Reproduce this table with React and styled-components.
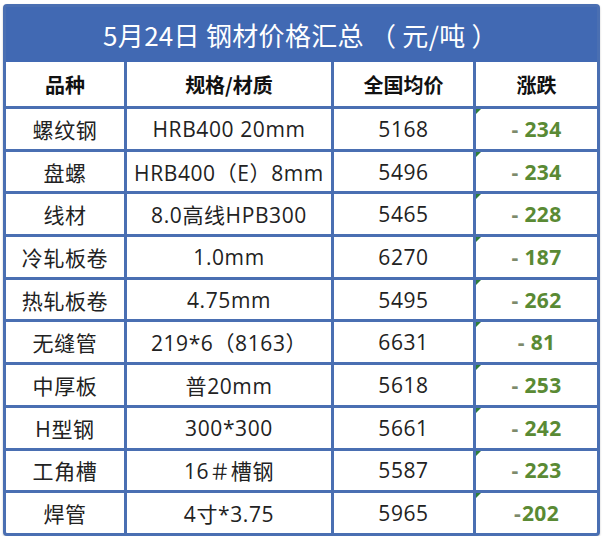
import React from "react";
import styled, { createGlobalStyle } from "styled-components";

const Global = createGlobalStyle`
  html, body { margin: 0; padding: 0; background: #ffffff; }
  body { font-family: "Open Sans", "Noto Sans CJK SC", sans-serif; }
`;

const BLUE = "#4a6fb2";

const Page = styled.div`
  padding: 4px 5px 0 3px;
`;

const Frame = styled.div`
  width: 597px;
  box-sizing: border-box;
  border: 3px solid ${BLUE};
  border-radius: 4px;
  background: ${BLUE};
  box-shadow: 0 1px 2px rgba(0, 0, 0, 0.25);
  overflow: hidden;
`;

const Title = styled.div`
  height: 55px;
  background: #4169b3;
  color: #ffffff;
  display: flex;
  align-items: center;
  justify-content: center;
  font-family: "Noto Sans CJK SC", sans-serif;
  font-weight: 400;
  font-size: 26px;
  letter-spacing: 0.3px;
  padding-right: 2px;
`;

const Grid = styled.div`
  display: grid;
  grid-template-columns: 118px 204px 139px 121px;
  grid-auto-rows: 39.7px;
  grid-template-rows: 44px;
  gap: 3px;
  background: ${BLUE};
`;

const Cell = styled.div`
  position: relative;
  background: #ffffff;
  display: flex;
  align-items: center;
  justify-content: center;
  font-size: ${(p) => (p.$head ? "20px" : "21px")};
  color: ${(p) => (p.$head ? "#111111" : "#222222")};
  font-weight: ${(p) => (p.$head ? 700 : 400)};
  letter-spacing: ${(p) => (p.$head ? "0" : "0.6px")};
  font-family: ${(p) =>
    p.$head ? `"Noto Sans CJK SC", sans-serif` : `"Open Sans", "Noto Sans CJK SC", sans-serif`};
  white-space: nowrap;
`;

const ChangeCell = styled(Cell)`
  font-weight: 700;
  letter-spacing: 0.3px;
  &::before {
    content: "";
    position: absolute;
    left: 0;
    top: 0;
    border-top: 5px solid #2f7d3a;
    border-right: 5px solid transparent;
  }
`;

const Dash = styled.span`
  color: #7d8a6b;
  margin-right: ${(p) => (p.$tight ? "1px" : "6px")};
`;

const Num = styled.span`
  color: #5a8a34;
`;

const rows = [
  ["螺纹钢", "HRB400 20mm", "5168", "234"],
  ["盘螺", "HRB400（E）8mm", "5496", "234"],
  ["线材", "8.0高线HPB300", "5465", "228"],
  ["冷轧板卷", "1.0mm", "6270", "187"],
  ["热轧板卷", "4.75mm", "5495", "262"],
  ["无缝管", "219*6（8163）", "6631", "81"],
  ["中厚板", "普20mm", "5618", "253"],
  ["H型钢", "300*300", "5661", "242"],
  ["工角槽", "16＃槽钢", "5587", "223"],
  ["焊管", "4寸*3.75", "5965", "202", true],
];

export default function App() {
  return (
    <Page>
      <Global />
      <Frame>
        <Title>5月24日 钢材价格汇总 （ 元/吨 ）</Title>
        <Grid>
          <Cell $head>品种</Cell>
          <Cell $head>规格/材质</Cell>
          <Cell $head>全国均价</Cell>
          <Cell $head>涨跌</Cell>
          {rows.map(([name, spec, price, chg, tight]) => (
            <React.Fragment key={name}>
              <Cell>{name}</Cell>
              <Cell>{spec}</Cell>
              <Cell>{price}</Cell>
              <ChangeCell>
                <Dash $tight={tight}>-</Dash>
                <Num>{chg}</Num>
              </ChangeCell>
            </React.Fragment>
          ))}
        </Grid>
      </Frame>
    </Page>
  );
}
